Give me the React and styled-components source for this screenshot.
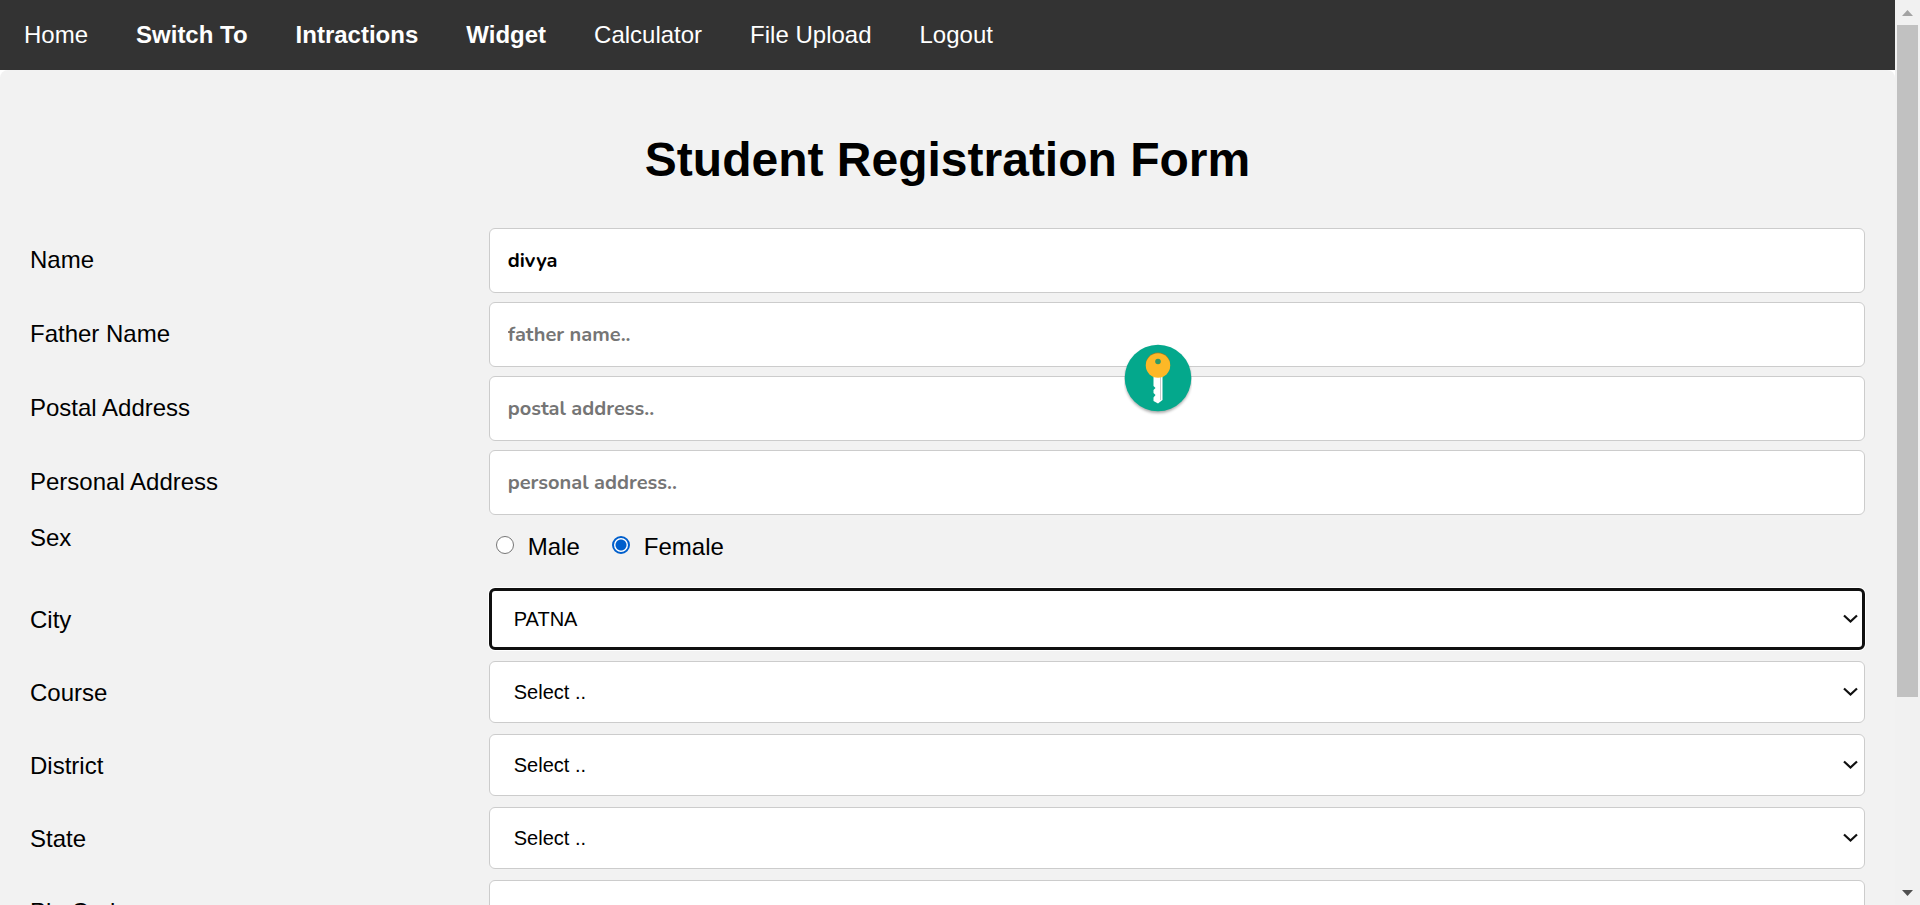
import React, { useState } from "react";
import styled, { createGlobalStyle } from "styled-components";

const GlobalStyle = createGlobalStyle`
  *, *::before, *::after { box-sizing: border-box; }
  body {
    margin: 0;
    background: #fff;
    color: #000;
    font-family: Arial, "Liberation Sans", sans-serif;
    font-size: 24px;
    line-height: 28px;
  }
`;

const Window = styled.div`
  display: grid;
  grid-template-columns: minmax(0, 1fr) 25px;
  height: 100vh;
  overflow: hidden;
`;

const Viewport = styled.div`
  min-height: 0;
  overflow: hidden;
`;

const NavBar = styled.nav`
  display: flex;
  background: #333;
`;

const NavLink = styled.a`
  padding: 21px 24px;
  color: #fff;
  font-weight: ${(p) => (p.$bold ? 700 : 400)};
  text-decoration: none;
  white-space: nowrap;
`;

const FormPanel = styled.main`
  padding: 61px 30px 30px;
  border-radius: 8px;
  background: #f2f2f2;
`;

const Title = styled.h1`
  margin: 0 0 40px;
  font-size: 48px;
  line-height: 57px;
  text-align: center;
`;

const Form = styled.form`
  display: flex;
  flex-direction: column;
  gap: 9px;
`;

const Row = styled.div`
  display: grid;
  grid-template-columns: 25% 75%;
  align-items: start;
`;

const Label = styled.label`
  padding: 18px 18px 18px 0;
`;

const GroupLabel = styled.span`
  padding-right: 18px;
`;

const TextInput = styled.input`
  width: 100%;
  height: 65px;
  padding: 18px;
  border: 1px solid #ccc;
  border-radius: 6px;
  background: #fff;
  color: #000;
  font: 700 20px/28px Nunito, Lato, sans-serif;
  &::placeholder { color: #757575; opacity: 1; }
`;

const SelectWrap = styled.div`
  position: relative;
  height: 62px;
`;

const Select = styled.select`
  display: block;
  appearance: none;
  width: 100%;
  height: 62px;
  padding: 0 36px 0 ${(p) => (p.$active ? 22 : 24)}px;
  border: ${(p) => (p.$active ? "3px solid #101010" : "1px solid #ccc")};
  border-radius: 6px;
  background: #fff;
  box-shadow: ${(p) => (p.$active ? "0 0 0 1px #fff" : "none")};
  color: #000;
  font: 20px/28px Arial, "Liberation Sans", sans-serif;
`;

const Chevron = styled.svg`
  position: absolute;
  right: 7px;
  top: 26px;
  width: 15px;
  height: 10px;
  pointer-events: none;
`;

const RadioGroup = styled.div`
  display: flex;
  gap: 32px;
  padding: 9px 0 18px 7px;
`;

const RadioLabel = styled.label`
  display: flex;
  align-items: flex-start;
  gap: 14px;
`;

const Radio = styled.input`
  appearance: none;
  flex: none;
  width: 18px;
  height: 18px;
  margin: 3px 0 0;
  border: 1px solid #767676;
  border-radius: 50%;
  background: #fff;
  &:checked {
    border: 2px solid #005fcc;
    background: radial-gradient(circle, #005fcc 5px, #fff 6px);
  }
`;

const KeyButton = styled.button`
  position: fixed;
  left: calc(60% - 28px);
  top: 343px;
  width: 68px;
  height: 74px;
  padding: 0;
  border: 0;
  background: none;
  svg { display: block; }
`;

const ScrollTrack = styled.div`
  display: flex;
  flex-direction: column;
  padding: 0 2px;
  background: #f1f1f1;
`;

const ScrollButton = styled.button`
  display: flex;
  flex: none;
  align-items: center;
  justify-content: center;
  height: 25px;
  padding: 0;
  border: 0;
  background: none;
  color: ${(p) => (p.$muted ? "#a3a3a3" : "#505050")};
`;

const ScrollSpace = styled.div`
  flex: 1;
`;

const ScrollThumb = styled.div`
  height: 78.6%;
  background: #c1c1c1;
`;

const navItems = [
  { text: "Home" },
  { text: "Switch To", bold: true },
  { text: "Intractions", bold: true },
  { text: "Widget", bold: true },
  { text: "Calculator" },
  { text: "File Upload" },
  { text: "Logout" },
];

function TextField({ id, label, ...rest }) {
  return (
    <Row>
      <Label htmlFor={id}>{label}</Label>
      <TextInput id={id} type="text" {...rest} />
    </Row>
  );
}

function SelectField({ id, label, options, active }) {
  return (
    <Row>
      <Label htmlFor={id}>{label}</Label>
      <SelectWrap>
        <Select id={id} $active={active}>
          {options.map((o) => (
            <option key={o}>{o}</option>
          ))}
        </Select>
        <Chevron viewBox="0 0 15 10" fill="none" stroke="#101010" strokeWidth="2.2" aria-hidden="true">
          <path d="M1 1.5 L7.5 7.5 L14 1.5" />
        </Chevron>
      </SelectWrap>
    </Row>
  );
}

export default function App() {
  const [sex, setSex] = useState("Female");
  return (
    <>
      <GlobalStyle />
      <Window>
        <Viewport>
          <NavBar>
            {navItems.map((i) => (
              <NavLink key={i.text} href="#" $bold={i.bold}>
                {i.text}
              </NavLink>
            ))}
          </NavBar>
          <FormPanel>
            <Title>Student Registration Form</Title>
            <Form>
              <TextField id="name" label="Name" defaultValue="divya" placeholder="name.." />
              <TextField id="father" label="Father Name" placeholder="father name.." />
              <TextField id="postal" label="Postal Address" placeholder="postal address.." />
              <TextField id="personal" label="Personal Address" placeholder="personal address.." />
              <Row role="radiogroup" aria-labelledby="sex-label">
                <GroupLabel id="sex-label">Sex</GroupLabel>
                <RadioGroup>
                  {["Male", "Female"].map((v) => (
                    <RadioLabel key={v}>
                      <Radio type="radio" name="sex" value={v} checked={sex === v} onChange={() => setSex(v)} />
                      {v}
                    </RadioLabel>
                  ))}
                </RadioGroup>
              </Row>
              <SelectField id="city" label="City" options={["PATNA"]} active />
              <SelectField id="course" label="Course" options={["Select .."]} />
              <SelectField id="district" label="District" options={["Select .."]} />
              <SelectField id="state" label="State" options={["Select .."]} />
              <TextField id="pin" label="Pin Code" placeholder="pincode.." />
            </Form>
          </FormPanel>
        </Viewport>
        <ScrollTrack>
          <ScrollButton type="button" aria-label="Scroll up" $muted>
            <svg width="11" height="6" viewBox="0 0 11 6"><path d="M0 6 L5.5 0 L11 6Z" fill="currentColor" /></svg>
          </ScrollButton>
          <ScrollSpace>
            <ScrollThumb />
          </ScrollSpace>
          <ScrollButton type="button" aria-label="Scroll down">
            <svg width="11" height="6" viewBox="0 0 11 6"><path d="M0 0 L5.5 6 L11 0Z" fill="currentColor" /></svg>
          </ScrollButton>
        </ScrollTrack>
      </Window>
      <KeyButton type="button" aria-label="Password manager">
        <svg width="68" height="74" viewBox="0 0 68 74">
          <defs>
            <filter id="soft" x="-20%" y="-20%" width="140%" height="140%">
              <feGaussianBlur stdDeviation="1.4" />
            </filter>
          </defs>
          <circle cx="34" cy="37" r="33" fill="#000" opacity="0.35" filter="url(#soft)" />
          <circle cx="34" cy="35" r="33.3" fill="#04a88c" />
          <path d="M29.5 30 H38.5 V57 L34 60.5 L29.5 58 V54.5 L31.5 52 L29.5 50 V47 L31.5 45 L29.5 43Z" fill="#fff" />
          <path d="M36.5 33 V57" stroke="#c9c9c9" strokeWidth="1" />
          <circle cx="34" cy="21.7" r="12.2" fill="#a87a1c" />
          <circle cx="34" cy="22.5" r="12.2" fill="#fdb827" />
          <circle cx="34" cy="18.5" r="2.8" fill="#2f9a66" />
        </svg>
      </KeyButton>
    </>
  );
}
